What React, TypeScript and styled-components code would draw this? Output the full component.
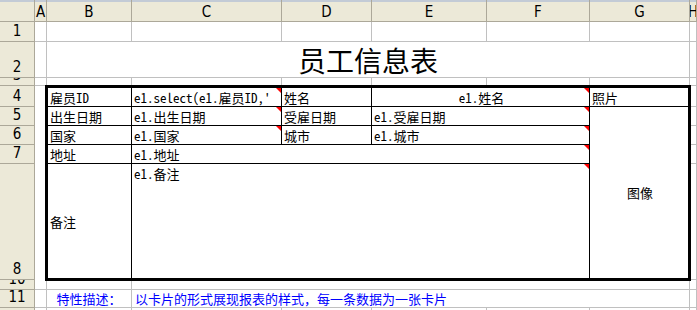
import React from 'react'
import styled, { createGlobalStyle } from 'styled-components'

const GlobalStyle = createGlobalStyle`
  html, body { margin: 0; padding: 0; background: #fff; }
  * { box-sizing: border-box; }
`

const CJK = `"Noto Sans CJK SC", "Noto Sans CJK JP", sans-serif`
const CELL_FONT = `"Noto Sans Mono CJK SC", "Liberation Mono", "Noto Sans CJK SC", monospace`
const HEAD_FONT = `"DejaVu Sans Condensed", "DejaVu Sans", sans-serif`

type Place = { $r: number; $c: number; $rs?: number; $cs?: number }

const Sheet = styled.div`
  display: grid;
  grid-template-columns: 35px 12px 85px 150px 90px 115px 103px 100px 1fr;
  grid-template-rows: 22px 20px 36px 8px 21px 19px 19px 19px 116px 10px 18px 1fr;
  width: 697px;
  height: 310px;
  overflow: hidden;
  background: #fff;
`

const Placed = styled.div<Place>`
  grid-row: ${p => p.$r} / span ${p => p.$rs ?? 1};
  grid-column: ${p => p.$c} / span ${p => p.$cs ?? 1};
  min-width: 0;
  min-height: 0;
`

const Corner = styled(Placed)`
  background: #ece9d8;
  border-right: 1px solid #aca899;
  border-bottom: 1px solid #aca899;
  box-shadow: inset 0 2px 0 #c3cbd6;
`

const ColHead = styled(Placed)`
  background: #ece9d8;
  border-right: 1px solid #aca899;
  border-bottom: 1px solid #aca899;
  box-shadow: inset 0 2px 0 #c3cbd6;
  padding-top: 2px;
  display: flex;
  align-items: center;
  justify-content: center;
  overflow: hidden;
  font-family: ${HEAD_FONT};
  font-size: 15px;
  color: #000;
`

const RowHead = styled(Placed)`
  background: #ece9d8;
  border-right: 1px solid #aca899;
  border-bottom: 1px solid #aca899;
  display: flex;
  align-items: flex-end;
  justify-content: center;
  padding-bottom: 2px;
  overflow: hidden;
  font-family: ${HEAD_FONT};
  font-size: 15px;
  line-height: 15px;
  color: #000;
`

const Cell = styled(Placed)<{ $noBottom?: boolean }>`
  background: #fff;
  border-right: 1px solid #c0c0c0;
  border-bottom: ${p => (p.$noBottom ? 'none' : '1px solid #c0c0c0')};
`

const TitleCell = styled(Cell)`
  display: flex;
  align-items: flex-end;
  justify-content: center;
  padding-bottom: 1px;
  font-family: ${CJK};
  font-size: 28px;
  line-height: 32px;
  color: #000;
`

const NoteCell = styled(Cell)<{ $center?: boolean }>`
  display: flex;
  align-items: center;
  justify-content: ${p => (p.$center ? 'center' : 'flex-start')};
  padding-left: ${p => (p.$center ? '0' : '3px')};
  white-space: nowrap;
  overflow: visible;
  font-family: ${CELL_FONT};
  font-size: 13px;
  line-height: 15px;
  color: #0000ff;
`

const Card = styled(Placed)`
  margin: -1px -1px -1px -2px;
  border: 3px solid #000;
  background: #fff;
  display: grid;
  grid-template-columns: 84px 150px 90px 115px 103px 98px;
  grid-template-rows: 19px 19px 19px 19px 114px;
  z-index: 1;
`

type Align = 'left' | 'center'
type VAlign = 'top' | 'center'

const Field = styled(Placed)<{ $align?: Align; $valign?: VAlign; $last?: boolean; $bottom?: boolean }>`
  position: relative;
  display: flex;
  justify-content: ${p => (p.$align === 'center' ? 'center' : 'flex-start')};
  align-items: ${p => (p.$valign === 'top' ? 'flex-start' : 'center')};
  padding: ${p => (p.$valign === 'top' ? '2px 0 0 2px' : '0 0 0 2px')};
  border-right: ${p => (p.$last ? 'none' : '1px solid #000')};
  border-bottom: ${p => (p.$bottom ? 'none' : '1px solid #000')};
  overflow: hidden;
  white-space: nowrap;
  font-family: ${CELL_FONT};
  font-size: 13px;
  line-height: 15px;
  color: #000;
`

const Mark = styled.span`
  position: absolute;
  top: 0;
  right: 0;
  width: 0;
  height: 0;
  border-top: 5px solid #ff0000;
  border-left: 5px solid transparent;
`

const columns = ['A', 'B', 'C', 'D', 'E', 'F', 'G', 'H']
const rowLabels: { label: string; r: number }[] = [
  { label: '1', r: 2 },
  { label: '2', r: 3 },
  { label: '3', r: 4 },
  { label: '4', r: 5 },
  { label: '5', r: 6 },
  { label: '6', r: 7 },
  { label: '7', r: 8 },
  { label: '8', r: 9 },
  { label: '10', r: 10 },
  { label: '11', r: 11 },
  { label: '12', r: 12 },
]

// each plain row: A..H individual cells
const plainRow = (r: number) =>
  columns.map((_, i) => <Cell key={`${r}-${i}`} $r={r} $c={i + 2} />)

type FieldDef = {
  text: string
  r: number
  c: number
  rs?: number
  cs?: number
  align?: Align
  valign?: VAlign
  mark?: boolean
}

const fields: FieldDef[] = [
  { text: '雇员ID', r: 1, c: 1 },
  { text: "e1.select(e1.雇员ID,'", r: 1, c: 2, mark: true },
  { text: '姓名', r: 1, c: 3 },
  { text: 'e1.姓名', r: 1, c: 4, cs: 2, align: 'center', mark: true },
  { text: '照片', r: 1, c: 6 },
  { text: '出生日期', r: 2, c: 1 },
  { text: 'e1.出生日期', r: 2, c: 2, mark: true },
  { text: '受雇日期', r: 2, c: 3 },
  { text: 'e1.受雇日期', r: 2, c: 4, cs: 2, mark: true },
  { text: '图像', r: 2, c: 6, rs: 4, align: 'center' },
  { text: '国家', r: 3, c: 1 },
  { text: 'e1.国家', r: 3, c: 2, mark: true },
  { text: '城市', r: 3, c: 3 },
  { text: 'e1.城市', r: 3, c: 4, cs: 2, mark: true },
  { text: '地址', r: 4, c: 1 },
  { text: 'e1.地址', r: 4, c: 2, cs: 4, mark: true },
  { text: '备注', r: 5, c: 1 },
  { text: 'e1.备注', r: 5, c: 2, cs: 4, valign: 'top', mark: true },
]

const App = () => {
  return (
    <>
      <GlobalStyle />
      <Sheet>
        <Corner $r={1} $c={1} />
        {columns.map((c, i) => (
          <ColHead key={c} $r={1} $c={i + 2}>
            {c}
          </ColHead>
        ))}
        {rowLabels.map(l => (
          <RowHead key={l.label} $r={l.r} $c={1}>
            {l.label}
          </RowHead>
        ))}

        {plainRow(2)}

        <Cell $r={3} $c={2} />
        <TitleCell $r={3} $c={3} $cs={6}>员工信息表</TitleCell>
        <Cell $r={3} $c={9} />

        {plainRow(4)}

        <Cell $r={5} $c={2} $rs={5} $noBottom />
        {[5, 6, 7, 8, 9].map(r => (
          <Cell key={`h${r}`} $r={r} $c={9} />
        ))}

        <Card $r={5} $c={3} $rs={5} $cs={6}>
          {fields.map(f => (
            <Field
              key={f.text}
              $r={f.r}
              $c={f.c}
              $rs={f.rs}
              $cs={f.cs}
              $align={f.align}
              $valign={f.valign}
              $last={f.c + (f.cs ?? 1) - 1 === 6}
              $bottom={f.r + (f.rs ?? 1) - 1 === 5}
            >
              {f.text}
              {f.mark && <Mark />}
            </Field>
          ))}
        </Card>

        <Cell $r={10} $c={2} />
        <Cell $r={10} $c={3} />
        <Cell $r={10} $c={4} $cs={5} />
        <Cell $r={10} $c={9} />

        <Cell $r={11} $c={2} />
        <NoteCell $r={11} $c={3} $center>特性描述：</NoteCell>
        <NoteCell $r={11} $c={4} $cs={5}>以卡片的形式展现报表的样式，每一条数据为一张卡片</NoteCell>
        <Cell $r={11} $c={9} />

        {plainRow(12)}
      </Sheet>
    </>
  )
}

export default App
